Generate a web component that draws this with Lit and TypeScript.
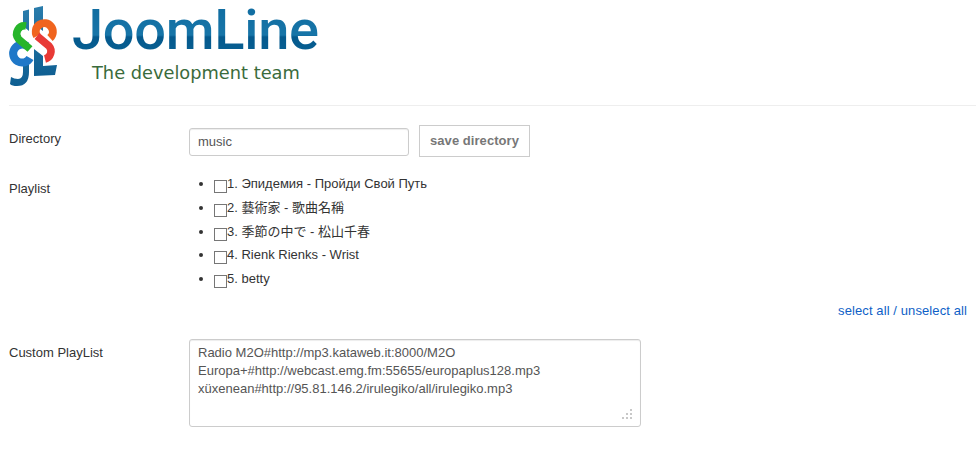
import { LitElement, html, css, svg } from "lit";
import { customElement } from "lit/decorators.js";

const TRACKS = ["1. Эпидемия - Пройди Свой Путь", "2. 藝術家 - 歌曲名稱", "3. 季節の中で - 松山千春", "4. Rienk Rienks - Wrist", "5. betty"];
const CUSTOM = `Radio M2O#http://mp3.kataweb.it:8000/M2O
Europa+#http://webcast.emg.fm:55655/europaplus128.mp3
xüxenean#http://95.81.146.2/irulegiko/all/irulegiko.mp3`;

const logo = svg`<svg class="mark" viewBox="0 0 60 90" width="60" height="90" aria-hidden="true">
  <defs><linearGradient id="b" x1="0" y1="0" x2="0" y2="1"><stop offset="0" stop-color="#2a7cab"/><stop offset="1" stop-color="#0f5f92"/></linearGradient></defs>
  <path d="M23 11 L29 9.500 L29 31 L23 26 Z M23 62 L29 64 L29 72 Q29 86 17 86 Q12 86 10 84 L11 77 Q14 79 18 79 Q23 79 23 72 Z" fill="url(#b)"/>
  <path d="M34 8 L43 6 L43 31 L34 24 Z M34 49 L43 56 L43 66 L57 65 L55 75 L34 76 Z" fill="url(#b)"/>
  <path d="M27 46 A9 9 0 1 0 30 58" fill="none" stroke="#1f78c8" stroke-width="8"/>
  <path d="M26 26 A8 8 0 0 0 18.500 39 L30 49" fill="none" stroke="#27b52a" stroke-width="7.500"/>
  <path d="M37 36 A8.500 8.500 0 1 1 50 38" fill="none" stroke="#f0641e" stroke-width="8"/>
  <path d="M37 36 L49 46 A8 8 0 0 1 45 59" fill="none" stroke="#e83a36" stroke-width="7.500"/>
</svg>`;

@customElement("app-root")
export class AppRoot extends LitElement {
  static styles = css`
    :host { display: block; width: 976px; height: 462px; overflow: hidden; background: #fff; font-family: "Liberation Sans", Arial, "Noto Sans CJK JP", sans-serif; font-size: 13px; line-height: 18px; color: #333; }
    .head { display: flex; height: 105px; margin-left: 9px; border-bottom: 1px solid #eee; box-sizing: content-box; }
    .mark { display: block; margin-left: -9px; flex: none; }
    .brand { display: flex; flex-direction: column; margin-left: 12px; }
    .name { font-family: Roboto, sans-serif; font-weight: 500; font-size: 56px; line-height: 58px; letter-spacing: -0.300px; margin-top: 1px; padding-bottom: 4px; margin-bottom: -5px; background: linear-gradient(#0f6b9f 0%, #1775a8 55%, #04598d 58%, #0b6496 100%); -webkit-background-clip: text; background-clip: text; color: transparent; }
    .tag { font-family: "DejaVu Sans", Verdana, sans-serif; font-size: 17.800px; line-height: 22px; color: #3a6b3c; margin: 4px 0 0 20px; }
    .row { display: flex; padding-left: 9px; }
    .label { width: 180px; flex: none; padding-top: 5px; }
    .dir { margin-top: 19px; height: 33px; }
    .text { box-sizing: border-box; width: 220px; height: 28px; margin: 3px 10px 0 0; padding: 3px 8px 5px; border: 1px solid #ccc; border-radius: 3px; font: inherit; color: #555; box-shadow: inset 0 1px 1px rgba(0,0,0,.075); outline: none; }
    .save { box-sizing: border-box; width: 111px; height: 32px; padding: 0; border: 1px solid #ccc; background: #fff; font: bold 13px/30px "Liberation Sans", Arial, sans-serif; letter-spacing: 0.050px; color: #777; }
    .list-row { margin-top: 17px; }
    ul { margin: 0; padding: 0 0 0 25px; list-style: disc; }
    li { height: 23.750px; line-height: 18px; }
    .box { appearance: none; -webkit-appearance: none; box-sizing: border-box; display: inline-block; width: 13px; height: 13px; margin: 0; vertical-align: -5px; border: 1px solid #767676; background: #fff; }
    .links { display: flex; justify-content: flex-end; padding-right: 9px; margin-top: 8px; height: 18px; color: #0e5fc7; letter-spacing: 0.100px; }
    .custom { margin-top: 19px; }
    .custom .label { padding-top: 5px; }
    .area-wrap { position: relative; width: 452px; height: 88px; }
    textarea { display: block; box-sizing: border-box; width: 452px; height: 88px; padding: 4px 8px; border: 1px solid #ccc; border-radius: 3px; font: inherit; color: #555; resize: none; box-shadow: inset 0 1px 1px rgba(0,0,0,.075); outline: none; overflow: hidden; }
    .grip { position: absolute; right: 7px; bottom: 6px; display: block; }
  `;

  render() {
    return html`
      <header class="head">
        ${logo}
        <div class="brand"><div class="name">JoomLine</div><div class="tag">The development team</div></div>
      </header>
      <div class="row dir">
        <div class="label">Directory</div>
        <input class="text" .value=${"music"} />
        <button class="save">save directory</button>
      </div>
      <div class="row list-row">
        <div class="label">Playlist</div>
        <ul>
          ${TRACKS.map((t) => html`<li><input class="box" type="checkbox" />${t}</li>`)}
        </ul>
      </div>
      <div class="links">select all / unselect all</div>
      <div class="row custom">
        <div class="label">Custom PlayList</div>
        <div class="area-wrap">
          <textarea .value=${CUSTOM}></textarea>
          <svg class="grip" width="13" height="13" viewBox="0 0 13 13" fill="#c8c8c8" aria-hidden="true">
            <rect x="9" y="1" width="2" height="2"/><rect x="5" y="5" width="2" height="2"/><rect x="9" y="5" width="2" height="2"/><rect x="1" y="9" width="2" height="2"/><rect x="5" y="9" width="2" height="2"/><rect x="9" y="9" width="2" height="2"/>
          </svg>
        </div>
      </div>
    `;
  }
}
